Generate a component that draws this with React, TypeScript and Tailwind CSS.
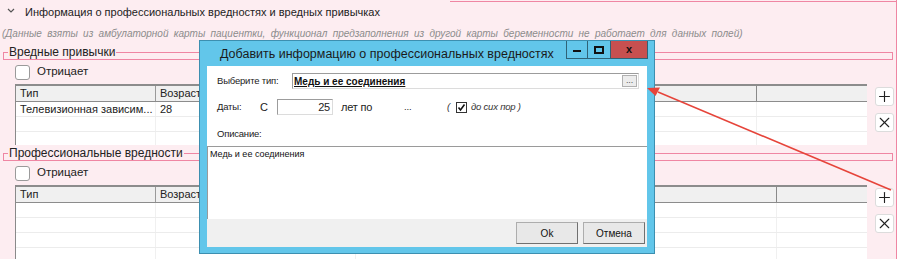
import { Plus, X } from 'lucide-react';

const ui = { fontFamily: '"Liberation Sans", Arial, sans-serif' };

interface SectionProps {
  title: string;
  rows: string[][];
  height: string;
  splitClass: string;
}

function Legend({ title }: { title: string }) {
  return (
    <fieldset className="mx-[3px] min-w-0 border border-[#ef86a3] p-0">
      <legend className="ml-[4px] px-[1px] text-[12px] leading-[14px] text-[#222]">{title}</legend>
    </fieldset>
  );
}

function Section({ title, rows, height, splitClass }: SectionProps) {
  return (
    <div>
      <Legend title={title} />
      <div className="mt-[3px] flex h-[18px] items-center gap-[7px] pl-[15px]">
        <span className="h-[15px] w-[15px] shrink-0 rounded-[3px] border border-[#9a9a9a] bg-white" />
        <span className="text-[11.5px] text-[#222]">Отрицает</span>
      </div>
      <div className="mt-[3px] flex items-start">
        <div className={`ml-[15px] w-[852px] shrink-0 overflow-hidden border-l border-[#8a8a8a] bg-white ${height}`}>
          <div className="flex h-[18px] border-t-2 border-b border-[#8c8c8c] bg-[#f0f0f0] text-[11px] leading-[15px] text-[#222]">
            <div className="w-[140px] shrink-0 border-r border-[#9a9a9a] pl-[4px]">Тип</div>
            <div className="w-[200px] shrink-0 border-r border-[#9a9a9a] pl-[4px]">Возраст</div>
            <div className={`${splitClass} shrink-0 border-r border-[#8a8a8a]`} />
            <div className="flex-1" />
          </div>
          {rows.map((r, i) => (
            <div key={i} className="flex h-[15px] border-b border-[#ececec] text-[11px] leading-[15px] text-[#222]">
              <div className="w-[140px] shrink-0 overflow-hidden whitespace-nowrap border-r border-[#f0f0f0] pl-[4px]">{r[0]}</div>
              <div className="w-[200px] shrink-0 border-r border-[#f0f0f0] pl-[4px]">{r[1]}</div>
              <div className={`${splitClass} shrink-0 border-r border-[#f0f0f0]`} />
              <div className="flex-1" />
            </div>
          ))}
        </div>
        <div className="ml-[8px] mt-[3px] flex flex-col gap-[7px]">
          <button className="flex h-[19px] w-[19px] items-center justify-center rounded-[3px] border border-[#dcdcdc] bg-white">
            <Plus size={17} strokeWidth={1.6} color="#222" />
          </button>
          <button className="flex h-[19px] w-[19px] items-center justify-center rounded-[3px] border border-[#dcdcdc] bg-white">
            <X size={17} strokeWidth={1.6} color="#222" />
          </button>
        </div>
      </div>
    </div>
  );
}

function Dialog() {
  return (
    <div className="absolute left-[199px] top-[40px] w-[456px] border border-[#3c8fb0] bg-[#62c6ea] px-[7px] pb-[6px]">
      <div className="flex h-[24px] items-start">
        <div className="whitespace-nowrap pl-[13px] pt-[3px] text-[12.5px] leading-[20px] text-[#1b1b1b]">
          Добавить информацию о профессиональных вредностях
        </div>
        <div className="ml-auto mr-[-1px] flex h-[18px] shrink-0">
          <div className="flex w-[22px] items-center justify-center border border-t-0 border-[#2f6377]">
            <span className="mt-[3px] h-[2px] w-[8px] bg-[#111]" />
          </div>
          <div className="flex w-[23px] items-center justify-center border border-l-0 border-t-0 border-[#2f6377]">
            <span className="h-[8px] w-[10px] border-2 border-[#111]" />
          </div>
          <div className="flex w-[37px] items-center justify-center border border-l-0 border-t-0 border-[#2f6377] bg-[#c75050] text-[11px] font-bold text-[#111]">
            x
          </div>
        </div>
      </div>
      <div className="mt-[1px] flex h-[153px] flex-col bg-white text-[9.5px] tracking-[-0.2px] text-[#222]">
        <div className="mt-[7px] flex h-[16px] items-center">
          <span className="w-[85px] shrink-0 pl-[10px]">Выберите тип:</span>
          <div className="flex h-[16px] w-[347px] shrink-0 items-center border border-[#9c9c9c] border-b-[#dcdcdc] border-r-[#dcdcdc] bg-white">
            <span className="flex-1 pl-[1px] text-[10px] font-bold tracking-normal text-[#111] underline">Медь и ее соединения</span>
            <span className="mr-[1px] flex h-[12px] w-[15px] items-start justify-center border border-[#b0b0b0] bg-[#ececec] text-[9px] leading-[8px] text-[#555]">...</span>
          </div>
        </div>
        <div className="mt-[10px] flex h-[16px] items-center">
          <span className="w-[53px] shrink-0 pl-[10px]">Даты:</span>
          <span className="w-[17px] shrink-0 text-[11px]">С</span>
          <span className="h-[16px] w-[56px] shrink-0 border border-[#9c9c9c] border-b-[#dcdcdc] border-r-[#dcdcdc] pr-[2px] text-right text-[11px] leading-[14px]">25</span>
          <span className="ml-[8px] w-[63px] shrink-0 text-[11px]">лет по</span>
          <span className="w-[43px] shrink-0">...</span>
          <span className="w-[9px] shrink-0 italic text-[#333]">(</span>
          <span className="flex h-[11px] w-[11px] shrink-0 items-center justify-center border border-[#333] bg-white">
            <svg width="9" height="9" viewBox="0 0 9 9"><path d="M1.5 4.5 L3.5 7 L7.5 1.5" fill="none" stroke="#111" strokeWidth="1.6" /></svg>
          </span>
          <span className="ml-[4px] text-[9.5px] italic text-[#333]">до сих пор )</span>
        </div>
        <div className="mt-[12px] h-[14px] pl-[10px] leading-[14px]">Описание:</div>
        <div className="mt-[5px] flex-1 border-l border-t border-[#9a9a9a] pl-[2px] pt-[1px] text-[9px] leading-[13px] tracking-normal text-[#111]">
          Медь и ее соединения
        </div>
      </div>
      <div className="flex h-[28px] items-center justify-end gap-[5px] bg-[#f0f0f0] pr-[2px] text-[10px] text-[#111]">
        <button className="h-[22px] w-[62px] border border-[#adadad] border-b-[#707070] border-r-[#707070] bg-[#e8e8e8]">Ok</button>
        <button className="h-[22px] w-[62px] border border-[#adadad] border-b-[#707070] border-r-[#707070] bg-[#e8e8e8]">Отмена</button>
      </div>
    </div>
  );
}

export default function App() {
  return (
    <div className="h-[259px] w-[900px] overflow-hidden bg-white">
      <div className="relative h-[259px] w-[897px] border-r border-[#ef86a3] bg-[#fdedf1]" style={ui}>
        <div className="flex h-[24px] items-start">
          <span className="ml-[6px] mt-[5px] w-[19px] shrink-0">
            <svg width="10" height="10" viewBox="0 0 10 10"><path d="M2 4 L5 7 L8 4" fill="none" stroke="#555" strokeWidth="1.2" /></svg>
          </span>
          <span className="mt-[4px] whitespace-nowrap text-[11px] leading-[16px] text-[#222]">Информация о профессиональных вредностях и вредных привычках</span>
          <span className="ml-[70px] mt-[1px] h-px flex-1 bg-[#ef86a3]" />
        </div>
        <div className="h-[20px] whitespace-nowrap pl-[2px] text-[10px] italic leading-[20px] text-[#8c8c8c] [word-spacing:2.5px]">
          (Данные взяты из амбулаторной карты пациентки, функционал предзаполнения из другой карты беременности не работает для данных полей)
        </div>
        <div className="mt-[1px]">
          <Section
            title="Вредные привычки"
            height="h-[61px]"
            splitClass="w-[401px]"
            rows={[["Телевизионная зависим...", "28"], ["", ""], ["", ""]]}
          />
        </div>
        <div className="mt-[1px]">
          <Section
            title="Профессиональные вредности"
            height="h-[75px]"
            splitClass="w-[421px]"
            rows={[["", ""], ["", ""], ["", ""], ["", ""]]}
          />
        </div>
        <Dialog />
        <svg className="pointer-events-none absolute left-0 top-0" width="900" height="259">
          <line x1="891" y1="190" x2="658" y2="92" stroke="#e6443a" strokeWidth="1.6" />
          <path d="M647 88 L660 87.5 L655.5 96 Z" fill="#e6443a" />
        </svg>
      </div>
    </div>
  );
}
